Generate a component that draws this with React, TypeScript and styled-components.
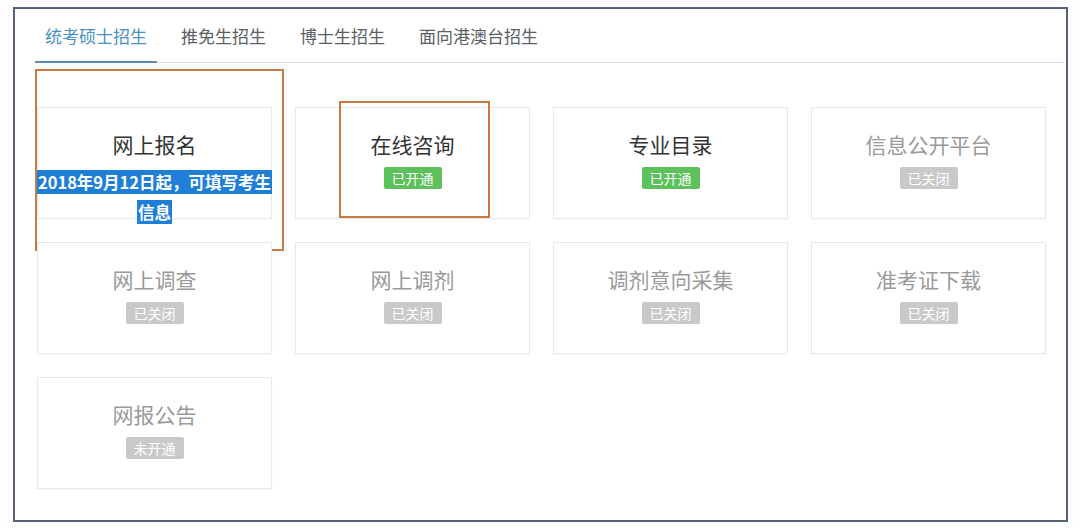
import styled, { createGlobalStyle } from 'styled-components';

const GlobalStyle = createGlobalStyle`
  html, body {
    margin: 0;
    padding: 0;
    background: #fdfdfd;
  }
  body {
    font-family: "Noto Sans CJK SC", "Noto Sans", sans-serif;
  }
`;

type Status = 'open' | 'closed' | 'pending';

const tabs = ['统考硕士招生', '推免生招生', '博士生招生', '面向港澳台招生'];

const services: { title: string; status: Status }[] = [
  { title: '网上报名', status: 'open' },
  { title: '在线咨询', status: 'open' },
  { title: '专业目录', status: 'open' },
  { title: '信息公开平台', status: 'closed' },
  { title: '网上调查', status: 'closed' },
  { title: '网上调剂', status: 'closed' },
  { title: '调剂意向采集', status: 'closed' },
  { title: '准考证下载', status: 'closed' },
  { title: '网报公告', status: 'pending' },
];

const badgeText: Record<Status, string> = {
  open: '已开通',
  closed: '已关闭',
  pending: '未开通',
};

const App = () => {
  return (
    <>
      <GlobalStyle />
      <Frame>
        <TabBar>
          {tabs.map((tab, i) => (
            <Tab key={tab} $active={i === 0}>
              {tab}
            </Tab>
          ))}
        </TabBar>
        <Grid>
          {services.map((s, i) => (
            <Card key={s.title}>
              <CardTitle $muted={s.status !== 'open'}>{s.title}</CardTitle>
              {i === 0 ? (
                <Notice>
                  <NoticeLine>
                    <Highlight>2018年9月12日起，可填写考生</Highlight>
                  </NoticeLine>
                  <NoticeLine>
                    <Highlight>信息</Highlight>
                  </NoticeLine>
                </Notice>
              ) : (
                <Badge $status={s.status}>{badgeText[s.status]}</Badge>
              )}
              {i === 0 && <Marker $left={-3} $top={-39} $width={249} $height={182} />}
              {i === 1 && <Marker $left={43} $top={-7} $width={151} $height={117} />}
            </Card>
          ))}
        </Grid>
      </Frame>
    </>
  );
};

const Frame = styled.div`
  box-sizing: border-box;
  width: 1055px;
  height: 515px;
  margin: 7px 0 0 13px;
  border: 2px solid #56627a;
  background: #ffffff;
  padding: 0 20px;
`;

const TabBar = styled.div`
  display: flex;
  gap: 14px;
  height: 53px;
  border-bottom: 1px solid #dcdfe3;
  margin-right: -18px;
`;

const Tab = styled.div<{ $active: boolean }>`
  box-sizing: border-box;
  height: 54px;
  padding: 0 10px;
  display: flex;
  align-items: center;
  font-size: 17px;
  color: ${(p) => (p.$active ? '#4a8fc4' : '#5a5f66')};
  border-bottom: 2px solid ${(p) => (p.$active ? '#5a8cb4' : 'transparent')};
  white-space: nowrap;
`;

const Grid = styled.div`
  display: grid;
  grid-template-columns: repeat(4, 235px);
  grid-auto-rows: 112px;
  column-gap: 23px;
  row-gap: 23px;
  margin: 44px 0 0 2px;
`;

const Card = styled.div`
  position: relative;
  box-sizing: border-box;
  border: 1px solid #e8e9ec;
  background: #fff;
  box-shadow: 0 1px 2px rgba(0, 0, 0, 0.03);
  padding-top: 23px;
  display: flex;
  flex-direction: column;
  align-items: center;
`;

const CardTitle = styled.div<{ $muted: boolean }>`
  font-size: 21px;
  line-height: 26px;
  color: ${(p) => (p.$muted ? '#9a9a9a' : '#333333')};
  margin-bottom: 10px;
  white-space: nowrap;
`;

const Badge = styled.span<{ $status: Status }>`
  display: inline-block;
  height: 22px;
  line-height: 22px;
  padding: 0 8px;
  font-size: 14px;
  color: #fff;
  border-radius: 2px;
  background: ${(p) => (p.$status === 'open' ? '#5cc15a' : '#c9c9c9')};
`;

const Notice = styled.div`
  display: flex;
  flex-direction: column;
  align-items: center;
  width: 100%;
`;

const NoticeLine = styled.div`
  line-height: 30px;
  white-space: nowrap;
  text-align: center;
`;

const Highlight = styled.span`
  background: #1f7fd6;
  color: #fff;
  font-size: 16.5px;
  font-weight: 700;
  padding: 0 1px;
`;

const Marker = styled.div<{ $left: number; $top: number; $width: number; $height: number }>`
  position: absolute;
  left: ${(p) => p.$left}px;
  top: ${(p) => p.$top}px;
  width: ${(p) => p.$width}px;
  height: ${(p) => p.$height}px;
  box-sizing: border-box;
  border: 2px solid #c67b47;
  pointer-events: none;
`;

export default App;
